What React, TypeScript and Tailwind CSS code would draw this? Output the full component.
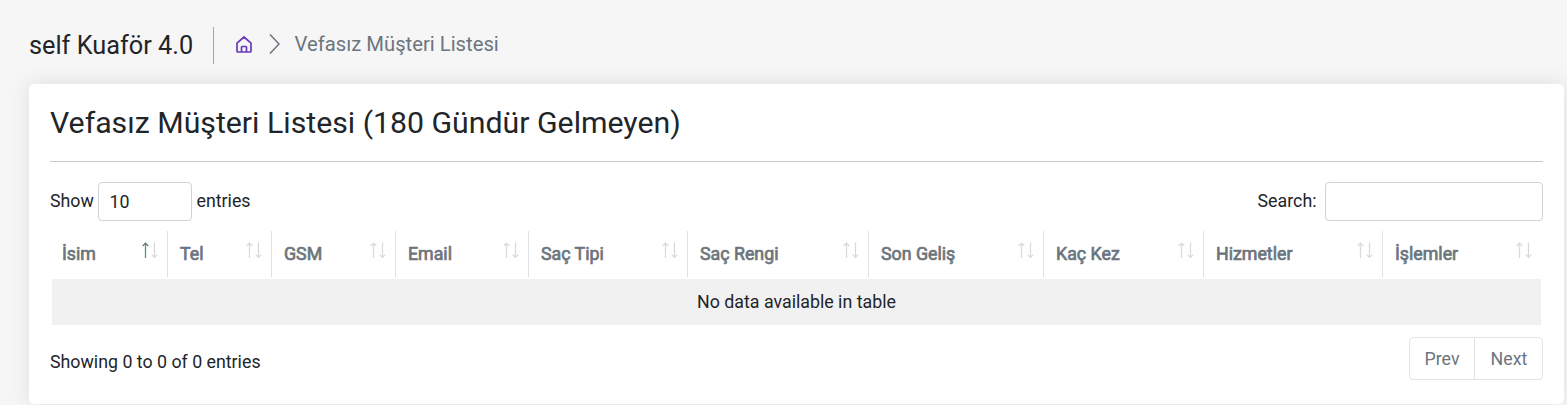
const columns = [
  { label: 'İsim', sorted: true },
  { label: 'Tel' },
  { label: 'GSM' },
  { label: 'Email' },
  { label: 'Saç Tipi' },
  { label: 'Saç Rengi' },
  { label: 'Son Geliş' },
  { label: 'Kaç Kez' },
  { label: 'Hizmetler' },
  { label: 'İşlemler' },
];

function SortArrows({ sorted }: { sorted?: boolean }) {
  const up = sorted ? '#53977b' : '#d9dadb';
  return (
    <svg className="mt-[11px] shrink-0" width="18" height="17" viewBox="0 0 18 17" fill="none">
      <path d="M5.5 16V1.5" stroke={up} strokeWidth="1.3" />
      <path d="M2.7 4L5.5 1.2L8.3 4" stroke={sorted ? '#6c757d' : up} strokeWidth="1.3" />
      <path d="M14.5 .5V15M11.7 12.6L14.5 15.4L17.3 12.6" stroke="#d9dadb" strokeWidth="1.3" />
    </svg>
  );
}

export default function App() {
  return (
    <div className="h-[405px] overflow-hidden bg-[#f6f6f6] pl-[29px] pr-[3px] font-['Roboto',sans-serif] text-[17.8px] text-[#212529]">
      <header className="flex h-[84px] items-start pt-[27px]">
        <h1 className="h-[37px] w-[185px] whitespace-nowrap border-r border-[#a3a6a8] text-[25.3px] leading-[38px]">self Kuaför 4.0</h1>
        <nav className="flex h-[35px] items-center pl-[22px] text-[20.25px] text-[#6c757d]">
          <svg width="16" height="17" viewBox="0 0 16 17" fill="none" stroke="#673ab7" strokeWidth="1.7" strokeLinejoin="round">
            <path d="M1 7.2L8 1L15 7.2V15.2Q15 16 14.2 16H1.8Q1 16 1 15.2ZM5.5 16V11.2Q5.5 10.5 6.2 10.5H9.8Q10.5 10.5 10.5 11.2V16" />
          </svg>
          <svg className="-mt-px ml-[17px]" width="11" height="20" viewBox="0 0 11 20" fill="none" stroke="#6c757d" strokeWidth="1.5">
            <path d="M1 .5L10 10L1 19.5" />
          </svg>
          <span className="-mt-px ml-[14.5px]">Vefasız Müşteri Listesi</span>
        </nav>
      </header>
      <main className="h-[320px] rounded-[5px] bg-white px-[21px] shadow-[0_0_20px_rgba(0,0,0,0.1)]">
        <h2 className="h-[78px] border-b border-[#c7c8c9] text-[30.25px] leading-[78px]">Vefasız Müşteri Listesi (180 Gündür Gelmeyen)</h2>
        <div className="mt-5 flex h-[39px] items-center justify-between">
          <label className="flex items-center">
            <span className="w-[44px]">Show</span>
            <input className="ml-1 mr-[4.5px] h-[39px] w-[94px] rounded-[4px] border border-[#ced4da] px-[10.5px]" defaultValue="10" />
            entries
          </label>
          <label className="flex items-center">
            Search:
            <input className="ml-[8.5px] h-[39px] w-[218px] rounded-[4px] border border-[#ced4da] px-[10px]" />
          </label>
        </div>
        <div className="mx-[2px] mt-[10px] grid h-[46px] grid-cols-[115px_104px_124px_133px_159px_181px_175px_160px_179px_159px]">
          {columns.map((column, index) => (
            <div
              key={column.label}
              className={`flex justify-between text-[#6c757d] ${index ? 'border-l border-[#dee2e6] pl-3 pr-[9.5px]' : 'pl-[10px] pr-[9px]'}`}
            >
              <span className="leading-[46px] [-webkit-text-stroke:0.7px_#6c757d]">{column.label}</span>
              <SortArrows sorted={column.sorted} />
            </div>
          ))}
        </div>
        <div className="mx-[2px] mt-[2px] h-[46px] bg-[#f1f1f1] text-center leading-[46px]">No data available in table</div>
        <footer className="mt-3 flex h-[43px] justify-between">
          <span className="leading-[50px]">Showing 0 to 0 of 0 entries</span>
          <div className="flex rounded-[4px] border border-[#dee2e6] text-[#6c757d]">
            <button className="w-[65px] border-r border-[#dee2e6] pt-px">Prev</button>
            <button className="w-[67px] pl-px pt-px">Next</button>
          </div>
        </footer>
      </main>
    </div>
  );
}
